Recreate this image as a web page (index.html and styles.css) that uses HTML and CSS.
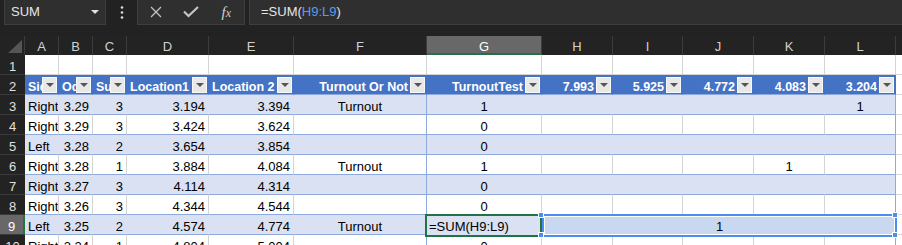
FILE: index.html
```html
<html>
  <head>
    <title>
      Sheet
    </title>
    <link rel="stylesheet" href="styles.css">
  </head>

  <body>
    <div class="formulabar">
      <div class="namebox"><span>SUM</span><span class="caret"></span></div>
      <div class="kebab">
        <svg width="4" height="13" viewBox="0 0 4 13"><circle cx="2" cy="1.5" r="1.3" fill="#ddd"/><circle cx="2" cy="6.5" r="1.3" fill="#ddd"/><circle cx="2" cy="11.5" r="1.3" fill="#ddd"/></svg>
      </div>
      <div class="fxbtns">
        <div class="btn"><svg width="12" height="12" viewBox="0 0 12 12"><path d="M1 1L11 11M11 1L1 11" stroke="#c4c4c4" stroke-width="1.3" fill="none"/></svg></div>
        <div class="btn"><svg width="16" height="12" viewBox="0 0 16 12"><path d="M1 5.5L5.5 10L15 1" stroke="#c4c4c4" stroke-width="2.2" fill="none"/></svg></div>
        <div class="btn"><span class="fx">f<span>x</span></span></div>
      </div>
      <div class="formula">=SUM(<span class="ref">H9:L9</span>)</div>
    </div>

    <div class="sheet">
      <div class="row cols">
        <div class="corner"><span class="tri"></span></div>
        <div>A</div><div>B</div><div>C</div><div>D</div><div>E</div><div>F</div>
        <div class="on">G</div><div>H</div><div>I</div><div>J</div><div>K</div><div>L</div><div></div>
      </div>

      <div class="row">
        <div class="rh">1</div>
        <div class="c"></div><div class="c"></div><div class="c"></div><div class="c"></div><div class="c"></div><div class="c"></div>
        <div class="c"></div><div class="c"></div><div class="c"></div><div class="c"></div><div class="c"></div><div class="c"></div><div class="c x"></div>
      </div>

      <div class="row tbl head">
        <div class="rh">2</div>
        <div class="c"><span class="lbl">Side</span><span class="dd"></span></div>
        <div class="c"><span class="lbl">Odds</span><span class="dd"></span></div>
        <div class="c"><span class="lbl">Surface</span><span class="dd"></span></div>
        <div class="c"><span class="lbl">Location1</span><span class="dd"></span></div>
        <div class="c"><span class="lbl">Location 2</span><span class="dd"></span></div>
        <div class="c hr"><span class="lbl">Turnout Or Not</span><span class="dd"></span></div>
        <div class="c hr"><span class="lbl">TurnoutTest</span><span class="dd"></span></div>
        <div class="c hr"><span class="lbl">7.993</span><span class="dd"></span></div>
        <div class="c hr"><span class="lbl">5.925</span><span class="dd"></span></div>
        <div class="c hr"><span class="lbl">4.772</span><span class="dd"></span></div>
        <div class="c hr"><span class="lbl">4.083</span><span class="dd"></span></div>
        <div class="c hr"><span class="lbl">3.204</span><span class="dd"></span></div>
        <div class="c x"></div>
      </div>

      <div class="row tbl band">
        <div class="rh">3</div>
        <div class="c">Right</div><div class="c r">3.29</div><div class="c r">3</div><div class="c r">3.194</div><div class="c r">3.394</div>
        <div class="c m">Turnout</div><div class="c m">1</div>
        <div class="c m"></div><div class="c m"></div><div class="c m"></div><div class="c m"></div><div class="c m">1</div>
        <div class="c x"></div>
      </div>

      <div class="row tbl">
        <div class="rh">4</div>
        <div class="c">Right</div><div class="c r">3.29</div><div class="c r">3</div><div class="c r">3.424</div><div class="c r">3.624</div>
        <div class="c m"></div><div class="c m">0</div>
        <div class="c m"></div><div class="c m"></div><div class="c m"></div><div class="c m"></div><div class="c m"></div>
        <div class="c x"></div>
      </div>

      <div class="row tbl band">
        <div class="rh">5</div>
        <div class="c">Left</div><div class="c r">3.28</div><div class="c r">2</div><div class="c r">3.654</div><div class="c r">3.854</div>
        <div class="c m"></div><div class="c m">0</div>
        <div class="c m"></div><div class="c m"></div><div class="c m"></div><div class="c m"></div><div class="c m"></div>
        <div class="c x"></div>
      </div>

      <div class="row tbl">
        <div class="rh">6</div>
        <div class="c">Right</div><div class="c r">3.28</div><div class="c r">1</div><div class="c r">3.884</div><div class="c r">4.084</div>
        <div class="c m">Turnout</div><div class="c m">1</div>
        <div class="c m"></div><div class="c m"></div><div class="c m"></div><div class="c m">1</div><div class="c m"></div>
        <div class="c x"></div>
      </div>

      <div class="row tbl band">
        <div class="rh">7</div>
        <div class="c">Right</div><div class="c r">3.27</div><div class="c r">3</div><div class="c r">4.114</div><div class="c r">4.314</div>
        <div class="c m"></div><div class="c m">0</div>
        <div class="c m"></div><div class="c m"></div><div class="c m"></div><div class="c m"></div><div class="c m"></div>
        <div class="c x"></div>
      </div>

      <div class="row tbl">
        <div class="rh">8</div>
        <div class="c">Right</div><div class="c r">3.26</div><div class="c r">3</div><div class="c r">4.344</div><div class="c r">4.544</div>
        <div class="c m"></div><div class="c m">0</div>
        <div class="c m"></div><div class="c m"></div><div class="c m"></div><div class="c m"></div><div class="c m"></div>
        <div class="c x"></div>
      </div>

      <div class="row tbl band">
        <div class="rh on">9</div>
        <div class="c">Left</div><div class="c r">3.25</div><div class="c r">2</div><div class="c r">4.574</div><div class="c r">4.774</div>
        <div class="c m">Turnout</div>
        <div class="c edit">=SUM(H9:L9)</div>
        <div class="c range">1<span class="hd tl"></span><span class="hd bl"></span><span class="hd tr"></span><span class="hd br"></span></div>
        <div class="c x"></div>
      </div>

      <div class="row tbl">
        <div class="rh">10</div>
        <div class="c">Right</div><div class="c r">3.24</div><div class="c r">1</div><div class="c r">4.804</div><div class="c r">5.004</div>
        <div class="c m"></div><div class="c m">0</div>
        <div class="c m"></div><div class="c m"></div><div class="c m"></div><div class="c m"></div><div class="c m"></div>
        <div class="c x"></div>
      </div>
    </div>
  </body>
</html>
```

FILE: styles.css
```css
body {
  margin: 0;
  background-color: #222;
  overflow: hidden;
  font-family: "Liberation Sans", Arial, sans-serif;
  font-size: 13px;
}

/* formula bar */

.formulabar {
  display: flex;
  height: 25px;
  margin-bottom: 11px;
}

.namebox {
  display: flex;
  align-items: center;
  justify-content: space-between;
  box-sizing: border-box;
  width: 102px;
  margin-left: 4px;
  padding: 0 6px 1px 6px;
  background-color: #2f2f2f;
  border: 1px solid #3e3e3e;
  border-top: none;
  color: #e6e6e6;
}

.caret {
  width: 0;
  height: 0;
  border-left: 4px solid transparent;
  border-right: 4px solid transparent;
  border-top: 4px solid #e0e0e0;
}

.kebab {
  display: flex;
  align-items: center;
  justify-content: center;
  width: 31px;
}

.fxbtns {
  display: flex;
  align-items: center;
  box-sizing: border-box;
  width: 108px;
  background-color: #2f2f2f;
  border: 1px solid #3e3e3e;
  border-top: none;
}

.btn {
  display: flex;
  align-items: center;
  justify-content: center;
  width: 36px;
}

.fx {
  font-family: "Liberation Serif", "Times New Roman", serif;
  font-style: italic;
  font-size: 15px;
  color: #d0d0d0;
}

.fx span {
  font-size: 12px;
}

.formula {
  flex: 1;
  margin-left: 4px;
  padding-left: 11px;
  background-color: #2f2f2f;
  border-left: 1px solid #3e3e3e;
  border-bottom: 1px solid #3e3e3e;
  line-height: 24px;
  color: #e6e6e6;
}

.ref {
  color: #5b9cf0;
}

/* grid */

.sheet {
  display: grid;
  grid-template-columns: 25px 34px 34px 34px 82px 85px 133px 115px 71px 70px 71px 71px 71px 1fr;
  grid-template-rows: 19px;
  grid-auto-rows: 20px;
}

.row {
  display: contents;
}

.row > div {
  box-sizing: border-box;
  padding: 5px 3px 0;
  line-height: 14px;
  white-space: nowrap;
  overflow: hidden;
}

.cols > div {
  padding-top: 4px;
  background-color: #232323;
  border-right: 1px solid #3c3c3c;
  color: #d2d2d2;
  text-align: center;
}

.cols > .on {
  background-color: #686868;
  border-bottom: 2px solid #217346;
  color: #fff;
}

.cols > .corner {
  display: flex;
  align-items: flex-end;
  justify-content: flex-end;
  padding: 0 2px 2px 0;
}

.tri {
  width: 0;
  height: 0;
  border-left: 14px solid transparent;
  border-bottom: 13px solid #555;
}

.rh {
  background-color: #232323;
  border-bottom: 1px solid #3a3a3a;
  color: #e0e0e0;
  text-align: center;
}

.rh.on {
  background-color: #686868;
  border-right: 2px solid #217346;
  color: #fff;
}

.c {
  background-color: #fff;
  border-right: 1px solid #d4d4d4;
  border-bottom: 1px solid #d4d4d4;
  color: #000;
}

.r {
  text-align: right;
}

.m {
  text-align: center;
}

.tbl > .c {
  border-bottom-color: #8ea9db;
}

.band > .c {
  background-color: #d9e1f2;
  border-right-color: #d9e1f2;
}

.tbl > :nth-child(7),
.tbl > :nth-child(13) {
  border-right-color: #8ea9db;
}

/* table header */

.head > .c {
  display: flex;
  align-items: flex-start;
  padding: 0 1px 0 3px;
  background-color: #4472c4;
  border-right-color: #4472c4;
  color: #fff;
  font-weight: bold;
  font-size: 12.5px;
}

.lbl {
  flex: 1;
  overflow: hidden;
  padding-top: 5px;
}

.hr .lbl {
  text-align: right;
  padding-right: 2px;
}

.dd {
  display: flex;
  align-items: center;
  justify-content: center;
  flex-shrink: 0;
  box-sizing: border-box;
  width: 15px;
  height: 16px;
  margin-top: 2px;
  background-color: #e8e8e8;
  border: 1px solid #f8f8f8;
}

.dd::after {
  content: "";
  border-left: 4px solid transparent;
  border-right: 4px solid transparent;
  border-top: 4px solid #555;
}

/* editing cell and referenced range */

.row > .edit {
  position: relative;
  z-index: 2;
  margin: -1px 0 -2px -2px;
  padding: 4px 0 0 2px;
  border: 2px solid #217346;
}

.row > .range {
  grid-column: span 5;
  position: relative;
  z-index: 3;
  overflow: visible;
  margin: -1px -1px -2px 0;
  padding: 4px 0 0;
  background-color: #c9d8f1;
  border: 2px solid #4b8ef0;
  box-shadow: inset 0 0 0 1px #fff;
  text-align: center;
}

.hd {
  position: absolute;
  box-sizing: border-box;
  width: 6px;
  height: 6px;
  background-color: #4b8ef0;
  border: 1px solid #fff;
}

.tl { left: -6px; top: -4px; }
.bl { left: -6px; bottom: -3px; }
.tr { right: -3px; top: -4px; }
.br { right: -3px; bottom: -3px; }

.row > .x {
  background-color: #fff;
  border-right: none;
  border-bottom-color: #d4d4d4;
}
```
